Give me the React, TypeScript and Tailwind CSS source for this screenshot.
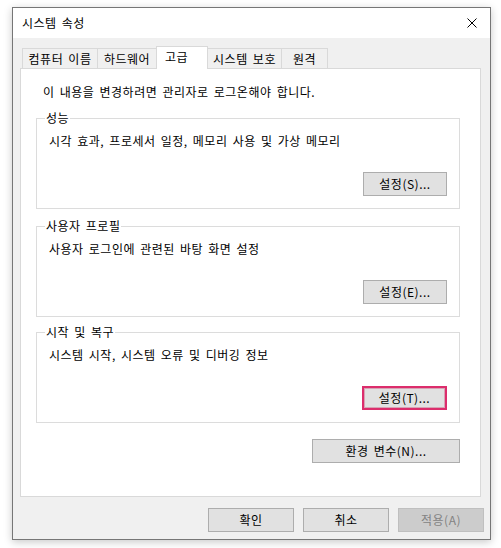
import React from "react";

const font = { fontFamily: '"Noto Sans CJK KR", "Noto Sans", sans-serif' };

function Btn({ label, w, disabled }: { label: string; w: string; disabled?: boolean }) {
  return (
    <div
      className={`${w} h-[24px] flex items-center justify-center border text-[12px] leading-[16px] ${
        disabled ? "bg-[#cccccc] border-[#bfbfbf] text-[#838383]" : "bg-[#e1e1e1] border-[#adadad] text-black"
      }`}
    >
      {label}
    </div>
  );
}

function Group({ title, text, btn, highlight }: { title: string; text: string; btn: string; highlight?: boolean }) {
  return (
    <div className="relative ml-[15px] w-[424px] h-[91px] border border-[#dcdcdc] flex flex-col">
      <div className="absolute left-[8px] top-[-9px] bg-white px-[1px] text-[12px] leading-[16px] text-black">{title}</div>
      <div className="pl-[12px] pt-[14px] text-[12px] leading-[16px] text-black">{text}</div>
      <div className="flex-1" />
      <div className="flex justify-end pr-[12px] pb-[12px]">
        {highlight ? (
          <div className="w-[85px] h-[24px] border-[2px] border-[#dc2d6c] bg-[#e1e1e1]">
            <div className="w-full h-full border border-[#d7a3b5] flex items-center justify-center text-[12px] leading-[16px] text-black">
              {btn}
            </div>
          </div>
        ) : (
          <Btn label={btn} w="w-[84px]" />
        )}
      </div>
    </div>
  );
}

function Tab({ label, w, selected, first }: { label: string; w: string; selected?: boolean; first?: boolean }) {
  if (selected) {
    return (
      <div
        className={`${w} -ml-px h-[23px] mb-[-1px] bg-white border-l border-t border-r border-[#d9d9d9] flex items-start pt-[2px] pl-[8px] text-[12px] leading-[16px] text-black relative z-20`}
      >
        {label}
      </div>
    );
  }
  return (
    <div
      className={`${w} ${first ? "" : "-ml-px"} h-[20px] bg-[#f0f0f0] border-l border-t border-r border-[#d9d9d9] flex items-center justify-center text-[12px] leading-[16px] text-black`}
    >
      {label}
    </div>
  );
}

export default function App() {
  return (
    <div className="w-[501px] h-[548px] bg-white pt-[7px] pl-[12px] tracking-[0.5px] [word-spacing:2px]" style={font}>
      <div className="w-[479px] h-[533px] border border-[#767676] shadow-[0_2px_8px_rgba(0,0,0,0.22)] flex flex-col">
        <div className="h-[30px] bg-white flex items-center justify-between pl-[9px] pr-[9px]">
          <span className="text-[12px] leading-[16px] text-black">시스템 속성</span>
          <svg width="10" height="10" viewBox="0 0 10 10" className="mr-[4px]">
            <path d="M0.5 0.5 L9.5 9.5 M9.5 0.5 L0.5 9.5" stroke="#000" strokeWidth="1" fill="none" />
          </svg>
        </div>
        <div className="flex-1 bg-[#f0f0f0] pl-[7px] pr-[9px] pt-[8px]">
          <div className="relative z-10 flex items-end h-[22px] pl-[2px]">
            <Tab label="컴퓨터 이름" w="w-[76px]" first />
            <Tab label="하드웨어" w="w-[60px]" />
            <Tab label="고급" w="w-[52px]" selected />
            <Tab label="시스템 보호" w="w-[75px]" />
            <Tab label="원격" w="w-[47px]" />
          </div>
          <div className="w-[461px] h-[429px] bg-white border border-[#d9d9d9]">
            <div className="ml-[22px] mt-[15px] text-[12px] leading-[16px] text-black">
              이 내용을 변경하려면 관리자로 로그온해야 합니다.
            </div>
            <div className="mt-[18px]">
              <Group title="성능" text="시각 효과, 프로세서 일정, 메모리 사용 및 가상 메모리" btn="설정(S)..." />
            </div>
            <div className="mt-[17px]">
              <Group title="사용자 프로필" text="사용자 로그인에 관련된 바탕 화면 설정" btn="설정(E)..." />
            </div>
            <div className="mt-[15px]">
              <Group title="시작 및 복구" text="시스템 시작, 시스템 오류 및 디버깅 정보" btn="설정(T)..." highlight />
            </div>
            <div className="mt-[16px] flex justify-end pr-[20px]">
              <Btn label="환경 변수(N)..." w="w-[148px]" />
            </div>
          </div>
          <div className="mt-[11px] flex justify-end gap-[9px] mr-[-3px]">
            <Btn label="확인" w="w-[86px]" />
            <Btn label="취소" w="w-[86px]" />
            <Btn label="적용(A)" w="w-[86px]" disabled />
          </div>
        </div>
      </div>
    </div>
  );
}
